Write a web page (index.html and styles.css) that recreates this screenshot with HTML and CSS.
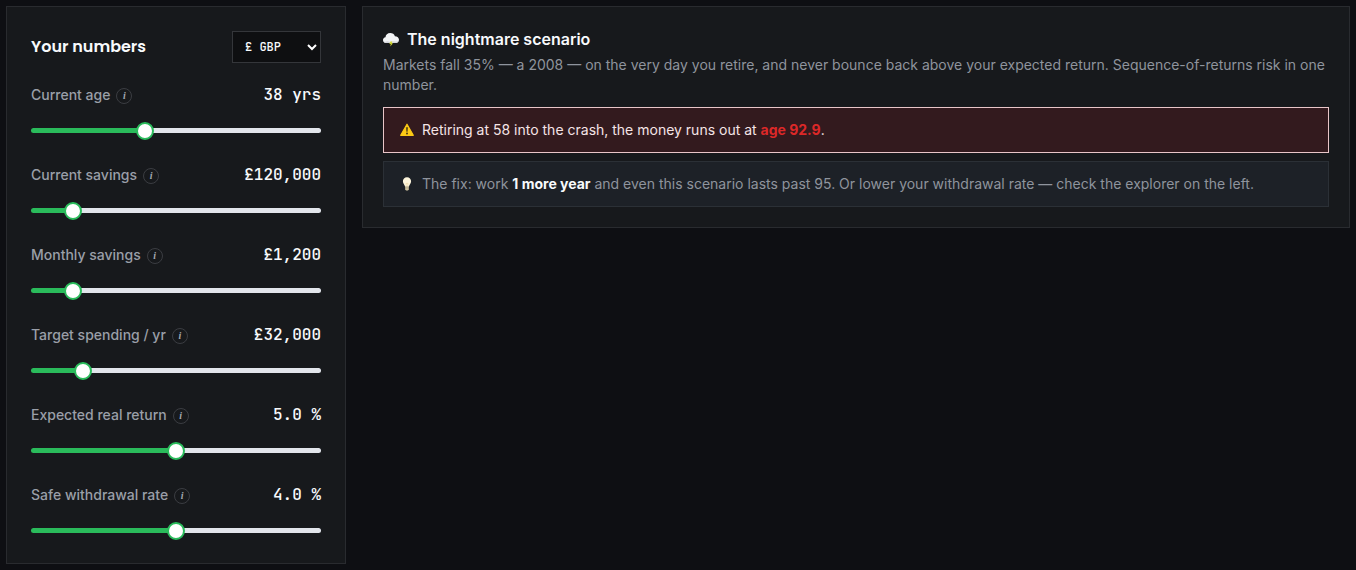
FILE: index.html
```html
<!DOCTYPE html>
<html lang="en">

<head>
  <meta charset="UTF-8">
  <meta name="viewport" content="width=device-width, initial-scale=1">
  <title>Your numbers</title>
  <link rel="stylesheet" href="styles.css">
</head>

<body>
  <main class="layout">
    <!-- Inputs -->
    <section class="card inputs">
      <div class="inputs-header">
        <h2>Your numbers</h2>
        <div class="currency">
          <select id="currency" aria-label="Currency">
            <option>£ GBP</option>
            <option>$ USD</option>
            <option>€ EUR</option>
          </select>
          <svg class="chevron" viewBox="0 0 10 6" aria-hidden="true"><path d="M1 1l4 4 4-4" /></svg>
        </div>
      </div>

      <div class="field">
        <div class="field-row">
          <label for="age">Current age</label>
          <button type="button" class="info" aria-label="About current age">i</button>
          <output for="age">38 yrs</output>
        </div>
        <input type="range" id="age" min="18" max="70" value="38" style="--fill: 38.5%">
      </div>

      <div class="field">
        <div class="field-row">
          <label for="savings">Current savings</label>
          <button type="button" class="info" aria-label="About current savings">i</button>
          <output for="savings">£120,000</output>
        </div>
        <input type="range" id="savings" min="0" max="1000000" step="5000" value="120000" style="--fill: 12%">
      </div>

      <div class="field">
        <div class="field-row">
          <label for="monthly">Monthly savings</label>
          <button type="button" class="info" aria-label="About monthly savings">i</button>
          <output for="monthly">£1,200</output>
        </div>
        <input type="range" id="monthly" min="0" max="10000" step="50" value="1200" style="--fill: 12%">
      </div>

      <div class="field">
        <div class="field-row">
          <label for="spending">Target spending / yr</label>
          <button type="button" class="info" aria-label="About target spending">i</button>
          <output for="spending">£32,000</output>
        </div>
        <input type="range" id="spending" min="10000" max="150000" step="1000" value="32000" style="--fill: 15.7%">
      </div>

      <div class="field">
        <div class="field-row">
          <label for="return">Expected real return</label>
          <button type="button" class="info" aria-label="About expected real return">i</button>
          <output for="return">5.0 %</output>
        </div>
        <input type="range" id="return" min="0" max="10" step="0.1" value="5" style="--fill: 50%">
      </div>

      <div class="field">
        <div class="field-row">
          <label for="rate">Safe withdrawal rate</label>
          <button type="button" class="info" aria-label="About safe withdrawal rate">i</button>
          <output for="rate">4.0 %</output>
        </div>
        <input type="range" id="rate" min="2" max="6" step="0.1" value="4" style="--fill: 50%">
      </div>
    </section>

    <!-- Crash scenario -->
    <section class="card scenario">
      <h3>
        <svg class="icon-cloud" viewBox="0 0 16 16" aria-hidden="true">
          <path d="M3.200 12C1.300 12 0 10.800 0 9.100c0-1.600 1-2.700 2.500-2.900C2.600 3.800 4.600 2 7.200 2c2.300 0 4.100 1.200 4.700 3.200C14.300 5.200 16 6.700 16 8.800c0 2-1.400 3.200-3.400 3.200z" fill="#f3f4f6" />
          <path d="M.3 10.200c1.500.8 3 .5 4.400 0 2 .9 4.300.8 6.100 0 1.700.6 3.400.4 4.800-.3-.5 1.400-1.500 2.100-3 2.100H3.200c-1.400 0-2.500-.7-2.900-1.800z" fill="#d3d5d9" />
          <path d="M7.500 10.500L6.300 13h1.500l-.6 2.600L10 12.300H8.500l1-1.800z" fill="#d3d832" />
        </svg>
        The nightmare scenario
      </h3>
      <p class="intro">Markets fall 35% — a 2008 — on the very day you retire, and never bounce back above your expected return. Sequence-of-returns risk in one number.</p>

      <div class="note note-danger">
        <svg class="icon" viewBox="0 0 14 14" aria-hidden="true">
          <path d="M7 1.200L13.300 12.300H.7z" fill="#fcc915" stroke="#fcc915" stroke-width="1.200" stroke-linejoin="round" />
          <path d="M6.100 4.200h1.800l-.3 4.600H6.400z" fill="#4a3a12" />
          <circle cx="7" cy="10.600" r="1" fill="#4a3a12" />
        </svg>
        <p>Retiring at 58 into the crash, the money runs out at <strong>age 92.9</strong>.</p>
      </div>

      <div class="note note-fix">
        <svg class="icon" viewBox="0 0 14 14" aria-hidden="true">
          <path d="M7 .3C4.500.3 2.900 2 2.900 4.300c0 2.200 1.700 3.200 2.200 5.400h3.800c.5-2.200 2.200-3.200 2.200-5.400C11.100 2 9.500.3 7 .3z" fill="#fdf5dc" />
          <path d="M6.400 9.500L6 6l1 .7L8 6l-.4 3.500" fill="none" stroke="#efd9a4" stroke-width=".6" />
          <path d="M5.200 9.600h3.600v2.600L8 13.400H6l-.8-1.200z" fill="#cfc3a0" />
          <path d="M5.200 10.900h3.600" stroke="#a4987b" stroke-width=".6" />
        </svg>
        <p>The fix: work <strong>1 more year</strong> and even this scenario lasts past 95. Or lower your withdrawal rate — check the explorer on the left.</p>
      </div>
    </section>
  </main>

  <script>
    const format = {
      age: (v) => v + ' yrs',
      savings: (v) => '£' + Number(v).toLocaleString('en-GB'),
      monthly: (v) => '£' + Number(v).toLocaleString('en-GB'),
      spending: (v) => '£' + Number(v).toLocaleString('en-GB'),
      return: (v) => Number(v).toFixed(1) + ' %',
      rate: (v) => Number(v).toFixed(1) + ' %'
    };

    // Keep the value and the filled part of the track in step with the slider
    document.querySelectorAll('input[type="range"]').forEach((input) => {
      input.addEventListener('input', () => {
        const percent = (input.value - input.min) / (input.max - input.min) * 100;
        input.style.setProperty('--fill', percent + '%');
        document.querySelector(`output[for="${input.id}"]`).textContent = format[input.id](input.value);
      });
    });
  </script>
</body>

</html>
```
FILE: styles.css
```css
/* Global Styles */
* {
  box-sizing: border-box;
}

body {
  margin: 0;
  padding: 6px;
  background-color: #0e0f13;
  color: #f8fafc;
  font-family: Inter, sans-serif;
  font-size: 14px;
  line-height: 20px;
}

h2, h3, p {
  margin: 0;
}

.layout {
  display: grid;
  grid-template-columns: 340px 1fr;
  gap: 16px;
  align-items: start;
}

.card {
  background-color: #17191c;
  border: 1px solid #292b2f;
}

/* Inputs */
.inputs {
  display: flex;
  flex-direction: column;
  gap: 24px;
  padding: 24px;
}

.inputs-header {
  display: flex;
  align-items: center;
  justify-content: space-between;
  margin-bottom: -4px;
}

.inputs-header h2 {
  font-family: Poppins, Inter, sans-serif;
  font-size: 16px;
  font-weight: 600;
}

.currency {
  position: relative;
}

.currency select {
  appearance: none;
  display: block;
  width: 89px;
  height: 32px;
  padding: 0 24px 0 12px;
  background-color: #0e0f11;
  border: 1px solid #34363a;
  border-radius: 0;
  color: #f8fafc;
  font-family: "JetBrains Mono", "DejaVu Sans Mono", monospace;
  font-size: 12px;
  font-weight: 500;
}

.chevron {
  position: absolute;
  top: 13px;
  right: 4px;
  width: 10px;
  height: 6px;
  overflow: visible;
  fill: none;
  stroke: #fff;
  stroke-width: 2;
  pointer-events: none;
}

.field-row {
  display: flex;
  align-items: center;
  height: 24px;
  margin-bottom: 14px;
}

.field-row label {
  color: #9a9fa8;
  font-weight: 500;
}

.field-row output {
  margin-left: auto;
  font-family: "JetBrains Mono", "DejaVu Sans Mono", monospace;
  font-size: 16px;
  font-weight: 500;
}

.info {
  width: 16px;
  height: 16px;
  margin: 2px 0 0 6px;
  padding: 0;
  background: none;
  border: 1px solid #3b3d42;
  border-radius: 50%;
  color: #a4a8b0;
  font-family: "Liberation Serif", serif;
  font-size: 10px;
  font-style: italic;
  font-weight: 700;
  line-height: 14px;
}

input[type="range"] {
  appearance: none;
  display: block;
  width: 100%;
  height: 18px;
  margin: 0;
  background: none;
  cursor: pointer;
}

input[type="range"]::-webkit-slider-runnable-track {
  height: 5px;
  border-radius: 3px;
  background: linear-gradient(to right, #2abb5b var(--fill), #e2e5eb var(--fill));
}

input[type="range"]::-webkit-slider-thumb {
  appearance: none;
  width: 18px;
  height: 18px;
  margin-top: -6px;
  background-color: #fff;
  border: 2px solid #2abb5b;
  border-radius: 50%;
}

/* Scenario */
.scenario {
  padding: 20px;
}

.scenario h3 {
  display: flex;
  align-items: center;
  gap: 8px;
  margin-bottom: 4px;
  font-size: 16px;
  font-weight: 600;
  line-height: 24px;
}

.icon-cloud {
  width: 16px;
  height: 16px;
}

.intro {
  margin-bottom: 12px;
  color: #8f949d;
}

.note {
  display: flex;
  align-items: center;
  gap: 8px;
  padding: 12px 16px;
  border: 1px solid;
}

.note + .note {
  margin-top: 8px;
}

.icon {
  flex: none;
  width: 14px;
  height: 14px;
}

.note-danger {
  background-color: #331a1e;
  border-color: #e8c5c8;
  color: #f5e4e6;
}

.note-danger strong {
  color: #dc2828;
}

.note-fix {
  background-color: #1d2127;
  border-color: #2b3036;
  color: #8f949d;
}

.note-fix strong {
  color: #f8fafc;
}
```
